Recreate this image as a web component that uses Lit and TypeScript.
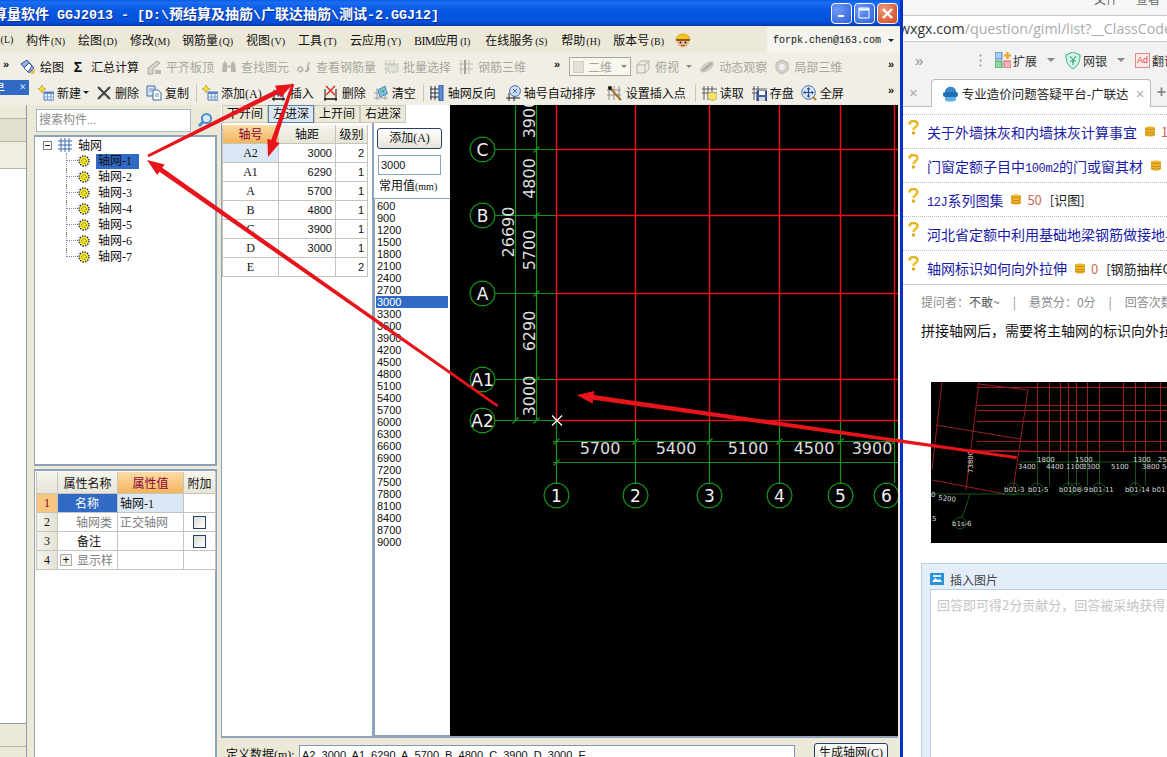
import { LitElement, html, svg, css, nothing } from 'lit';
import { customElement } from 'lit/decorators.js';

const UI_FONT = css`"Liberation Serif", "Noto Sans CJK SC", sans-serif`;

/* ---------- icones ---------- */
const ico = (body: unknown, w = 16, h = 16) =>
  html`<svg class="ico" width=${w} height=${h} viewBox="0 0 16 16">${body}</svg>`;

const gridLines = (stroke: string) => svg`<path d="M3 1v14M7 1v14M11 1v14M1 5h14M1 10h14" stroke=${stroke} fill="none"/>`;

const ICONS: Record<string, unknown> = {
  draw: ico(svg`<path d="M1 5l6-4 7 8-5 5z" fill="#8fb4e4" stroke="#33579c"/><path d="M4 9l5-5 3 3-4 6z" fill="#fff" stroke="#33579c"/><path d="M9 14l6-4-1 5z" fill="#e8b93c"/>`),
  align: ico(svg`<path d="M2 9l9-7 3 2-7 6v5H2z" fill="#d6d5cc" stroke="#a9a89f"/><path d="M9 11h6v4H9z" fill="#bdbcb2"/>`),
  find: ico(svg`<path d="M2 4h4v9H1zM10 4h4l1 9h-5z" fill="#b7b6ad"/><path d="M6 6h4v3H6z" fill="#cfcec5"/><path d="M3 2h2v2H3zM11 2h2v2h-2z" fill="#c9c8be"/>`),
  rebar: ico(svg`<path d="M2 12c-1-3 2-5 4-3s-1 5-3 3M9 12c2 1 5-1 3-4M13 3l-2 9" stroke="#b2b1a8" stroke-width="1.6" fill="none"/>`),
  batch: ico(svg`${gridLines('#c6c5bb')}<path d="M5 6h10v7H5z" fill="#e2e1d8" stroke="#bbb" stroke-dasharray="2 1"/>`),
  rebar3d: ico(svg`${gridLines('#bdbcb2')}<path d="M7 1v14" stroke="#a3a298" stroke-width="2"/>`),
  top: ico(svg`<path d="M2 6l4-4h8v8l-4 4H2z" fill="#eeede3" stroke="#b2b1a8"/><path d="M2 6h8v8M10 6l4-4" stroke="#b2b1a8" fill="none"/>`),
  orbit: ico(svg`<ellipse cx="8" cy="8" rx="8" ry="4" transform="rotate(-35 8 8)" fill="#cfcec5"/><path d="M3 12L13 4" stroke="#aaa99f" stroke-width="2"/>`),
  local: ico(svg`<path d="M8 1l6 3v7l-6 4-6-4V4z" fill="#d3d2c9" stroke="#b9b8ae"/><circle cx="8" cy="8" r="3" fill="#eee"/>`),
  newSheet: ico(svg`<path d="M4 0l1.4 2.6L8 4 5.4 5.4 4 8 2.6 5.4 0 4l2.6-1.4z" fill="#f4dc3a" stroke="#a88b16" stroke-width=".6"/><path d="M6 7h10v8H6z" fill="#eaf1fb" stroke="#4d74b4"/><path d="M6 7h10v2H6z" fill="#5a86c6"/><path d="M9.5 9v6M13 9v6M6 12h10" stroke="#7f9dc9"/>`),
  cross: ico(svg`<path d="M2 2l12 12M14 2L2 14" stroke="#444" stroke-width="2.2"/>`),
  copy: ico(svg`<path d="M1 1h8v10H1z" fill="#d9e6f7" stroke="#40699f"/><path d="M7 5h5l3 3v7H7z" fill="#fff" stroke="#40699f"/><path d="M9 9h4M9 11h4M3 4h4M3 6h3" stroke="#6c8fc0"/>`),
  insert: ico(svg`<path d="M2 14h13" stroke="#111" stroke-width="1.5"/><path d="M4 5v11M13 5v11" stroke="#111"/><path d="M7 2h3v6H7z" fill="#3566b8"/><path d="M5 8h7l-3.5 4z" fill="#3566b8"/>`, 18),
  del: ico(svg`<path d="M2 14h13" stroke="#111" stroke-width="1.5"/><path d="M3 4v12M14 4v12" stroke="#111"/><path d="M4 1l9 9M13 1l-9 9" stroke="#d22" stroke-width="1.4"/>`, 18),
  clear: ico(svg`<path d="M1 13h14M4 3v12M12 3v12M1 8h14" stroke="#9aa0aa"/><path d="M5 5l7-4 2 8-7 3z" fill="#7cc0e8" stroke="#4a8ab8"/><path d="M7 6l4-1v3z" fill="#52b056"/>`),
  reverse: ico(svg`<path d="M2 1v14M6 1v14M1 4h11M1 8h11M1 12h11" stroke="#26324a"/><path d="M10 0h4v16h-4z" fill="#5d8ed6" stroke="#2d5aa0"/>`),
  autosort: ico(svg`<path d="M1 13h14M4 8v8M9 8v8" stroke="#222"/><circle cx="10" cy="6" r="5.4" fill="#cfe0f6" stroke="#3f6cb0"/><path d="M8 4l4 4M12 4l-4 4" stroke="#3f6cb0"/>`),
  setpoint: ico(svg`<path d="M3 1v14M8 1v14M13 1v14M1 5h14M1 10h14" stroke="#8a8f98"/><path d="M4 3l11 12" stroke="#a8742a" stroke-width="2"/><circle cx="4" cy="3" r="2" fill="#111"/>`, 18),
  read: ico(svg`<path d="M3 1v14M7 1v14M11 1v14M1 4h15M1 8h15" stroke="#555c68"/><path d="M7 9c1-2 7-2 9 0v4c-1 3-7 3-9 0z" fill="#f4e36a" stroke="#c8b13a"/>`),
  save: ico(svg`<path d="M3 1v14M7 1v14M1 4h15M1 8h15" stroke="#555c68"/><path d="M6 6h10v10H6z" fill="#3f5fb0" stroke="#26397a"/><path d="M8 6h6v4H8z" fill="#fff"/><path d="M8 12h6v4H8z" fill="#d8d8d8"/>`),
  full: ico(svg`<circle cx="7.5" cy="7.5" r="6.8" fill="#dbe7f6" stroke="#4a70ac"/><path d="M7.5 3v9M3 7.5h9" stroke="#2c4f92" stroke-width="1.2"/><path d="M7.5 2l2 2.4h-4zM7.5 13l2-2.4h-4zM2 7.5l2.4-2v4zM13 7.5l-2.4-2v4z" fill="#2c4f92"/><path d="M12 12l3 3" stroke="#b8862a" stroke-width="2"/>`),
};

const GEAR = html`<svg width="12" height="12" viewBox="0 0 12 12"><circle cx="6" cy="6" r="4.6" fill="#f6ea2e"/><circle cx="6" cy="6" r="5" fill="none" stroke="#222" stroke-width="1.4" stroke-dasharray="1.4 1.2"/><circle cx="6" cy="6" r="2.2" fill="none" stroke="#444" stroke-dasharray="1 1"/></svg>`;

/* ---------- fenetre logiciel ---------- */
type Tool = { icon?: string; label: string; off?: boolean; caret?: boolean; sigma?: boolean; sep?: boolean; wide?: boolean };

const MENU: [string, string][] = [
  ['构件', 'N'], ['绘图', 'D'], ['修改', 'M'], ['钢筋量', 'Q'], ['视图', 'V'], ['工具', 'T'],
  ['云应用', 'Y'], ['BIM应用', 'I'], ['在线服务', 'S'], ['帮助', 'H'], ['版本号', 'B'],
];

const ROW1_A: Tool[] = [
  { icon: 'draw', label: '绘图' },
  { sigma: true, label: '汇总计算' },
  { icon: 'align', label: '平齐板顶', off: true },
  { icon: 'find', label: '查找图元', off: true },
  { icon: 'rebar', label: '查看钢筋量', off: true },
  { icon: 'batch', label: '批量选择', off: true },
  { icon: 'rebar3d', label: '钢筋三维', off: true },
];
const ROW1_B: Tool[] = [
  { icon: 'top', label: '俯视', off: true, caret: true },
  { icon: 'orbit', label: '动态观察', off: true },
  { icon: 'local', label: '局部三维', off: true },
];
const ROW2: Tool[] = [
  { icon: 'newSheet', label: '新建', caret: true },
  { icon: 'cross', label: '删除' },
  { icon: 'copy', label: '复制' },
  { sep: true, label: '' },
  { icon: 'newSheet', label: '添加(A)' },
  { icon: 'insert', label: '插入' },
  { icon: 'del', label: '删除' },
  { icon: 'clear', label: '清空' },
  { sep: true, label: '' },
  { icon: 'reverse', label: '轴网反向', wide: true },
  { icon: 'autosort', label: '轴号自动排序', wide: true },
  { icon: 'setpoint', label: '设置插入点', wide: true },
  { sep: true, label: '' },
  { icon: 'read', label: '读取' },
  { icon: 'save', label: '存盘' },
  { icon: 'full', label: '全屏' },
];

const AXIS_ROWS = [
  ['A2', '3000', '2'], ['A1', '6290', '1'], ['A', '5700', '1'], ['B', '4800', '1'],
  ['C', '3900', '1'], ['D', '3000', '1'], ['E', '', '2'],
];
const COMMON = [600, 900, 1200, 1500, 1800, 2100, 2400, 2700, 3000, 3300, 3600, 3900, 4200, 4500, 4800, 5100,
  5400, 5700, 6000, 6300, 6600, 6900, 7200, 7500, 7800, 8100, 8400, 8700, 9000];

@customElement('ggj-window')
export class GgjWindow extends LitElement {
  static styles = css`
    :host { display: block; width: 900px; height: 757px; overflow: hidden; background: #ece9d8; font: 12px ${UI_FONT}; color: #111; }
    .title { height: 26px; display: flex; align-items: center; padding-right: 2px; color: #fff; font-size: 14px; font-weight: 700; white-space: pre;
      background: linear-gradient(180deg, #0a5fe8, #1c6cf0 10%, #0658e4 40%, #0450da 85%, #0238b0); }
    .title .txt { margin-left: -7px; flex: 1; text-shadow: 1px 1px 0 #0a2f90; }
    .mono { font-family: "Liberation Mono", monospace; font-size: 13.33px; }
    .wbtn { width: 21px; height: 21px; margin-left: 2px; box-sizing: border-box; border: 1px solid #fff; border-radius: 4px; display: flex; align-items: center; justify-content: center;
      background: radial-gradient(circle at 30% 30%, #6f9af2, #2c5fdc); }
    .wbtn.close { background: radial-gradient(circle at 30% 30%, #ee9a7c, #d0431c); }
    .menu { height: 27px; display: flex; align-items: center; gap: 12px; background: #ece9d8; white-space: nowrap; }
    .menu .m { display: inline-block; width: 16px; font-size: 10px; text-align: center; }
    .menu .tight { letter-spacing: -0.7px; }
    .menu .tight .m { letter-spacing: 0; }
    .menu .hat { margin-left: -3px; }
    .account { margin-left: auto; width: 133px; align-self: stretch; margin-top: 1px; background: #f5f4ee; display: flex; align-items: center; box-sizing: border-box; padding: 0 6px; font: 10px "Liberation Mono", monospace; justify-content: space-between; }
    .bar { display: flex; align-items: center; white-space: nowrap; background: #f1efe5; overflow: hidden; }
    .bar.r1 { height: 27px; }
    .bar.r2 { height: 25px; }
    .chev { font: 700 11px "Liberation Sans", sans-serif; width: 8px; margin-top: -5px; color: #111; }
    .tool { display: flex; align-items: center; gap: 4px; margin-right: 7px; }
    .r2 .tool { gap: 3px; }
    .tool.wide { margin-right: 9px; }
    .tool.off { color: #a8a79e; }
    .caret { width: 0; height: 0; border: 3px solid transparent; border-top: 3px solid #222; border-bottom: 0; margin-left: -1px; }
    .tool.off .caret { border-top-color: #888; margin-left: 3px; }
    .sigma { font: 700 14px "Liberation Sans", sans-serif; width: 14px; text-align: center; margin-right: 2px; }
    .sep { width: 1px; height: 18px; background: #c9c7b8; margin-right: 5px; }
    .combo { width: 62px; height: 19px; box-sizing: border-box; border: 1px solid #a8a79e; background: #f7f6ef; color: #a8a79e; display: flex; align-items: center; gap: 4px; padding: 0 3px; margin: 0 4px 0 7px; }
    .combo i { width: 13px; height: 10px; background: #e3e2d8; border: 1px solid #d0cfc5; }
    .combo .caret { border-top-color: #888; margin-left: 5px; }
    .panel-tab { width: 29px; height: 15px; margin-bottom: 10px; background: #316ac5; color: #fff; overflow: hidden; display: flex; align-items: center; justify-content: space-between; flex: none; box-sizing: border-box; padding-right: 3px; margin-right: 9px; }
    .panel-tab b { font-weight: 400; margin-left: -7px; }
    .body { display: flex; height: 652px; }
    .stub { width: 27px; margin-right: 7px; display: flex; flex-direction: column; border-right: 1px solid #8c9aaa; box-sizing: border-box; flex: none; }
    .stub div { border-bottom: 1px solid #b8b6a6; box-sizing: border-box; }
    .stub .a { height: 14px; } .stub .b { height: 23px; background: #e2dfcd; } .stub .c { height: 27px; background: #f0eee0; }
    .stub .w { height: 555px; background: #fff; border-bottom: 1px solid #8c9aaa; } .stub .d { height: 23px; } .stub .e { flex: 1; border: 0; }
    .side { width: 183px; flex: none; display: flex; flex-direction: column; }
    .search { height: 30px; display: flex; align-items: center; gap: 6px; padding-left: 2px; box-sizing: border-box; }
    .search .inp { width: 155px; height: 23px; box-sizing: border-box; border: 1px solid #a9b8c8; background: #fff; color: #8b8b8b; padding-left: 2px; line-height: 21px; font-size: 12px; }
    .tree { height: 331px; box-sizing: border-box; border: 2px solid #8ea2b8; border-width: 2px 2px 2px 1px; background: #fff; }
    .node { height: 16px; display: flex; align-items: center; }
    .root { padding-left: 8px; gap: 6px; }
    .exp { width: 9px; height: 9px; box-sizing: border-box; border: 1px solid #808080; display: flex; align-items: center; justify-content: center; }
    .exp::after { content: ""; width: 5px; height: 1px; background: #222; }
    .leaf { padding-left: 31px; }
    .conn { width: 12px; height: 16px; border-left: 1px dotted #888; box-sizing: border-box; flex: none; }
    .conn i { display: block; height: 8px; border-bottom: 1px dotted #888; box-sizing: border-box; }
    .leaf.last .conn { height: 8px; align-self: flex-start; }
    .lb { margin-left: 6px; padding: 0 2px; height: 15px; line-height: 15px; }
    .lb.sel { background: #316ac5; color: #111; width: 39px; }
    .props { flex: 1; margin-top: 3px; border: 2px solid #8ea2b8; border-width: 2px 2px 0 1px; background: #fff; padding: 1px 0 0 1px; }
    table { border-collapse: collapse; table-layout: fixed; background: #fff; }
    td, th { border: 1px solid #c5c5bb; font-weight: 400; padding: 0; overflow: hidden; white-space: nowrap; font-size: 12px; }
    th { background: linear-gradient(#f5f4ec, #e7e5d8); border-top: 0; }
    th.on { background: linear-gradient(#fbdca6, #f2b45c); color: #8a0038; }
    .props table td, .props table th { height: 18px; }
    .props th { height: 21px !important; }
    .rowno { background: linear-gradient(90deg, #f4f3ea, #e4e2d4); text-align: center; }
    .rowno.on { background: #f8c67e; color: #8a0038; }
    .pn { text-align: right; padding-right: 16px; }
    .pn.on { background: #316ac5; color: #fff; padding-right: 18px; }
    .gray { color: #808080; }
    .pv { padding-left: 2px; }
    .pv.on { background: #dce7f5; }
    .check { display: block; width: 13px; height: 13px; margin: 0 auto; box-sizing: border-box; border: 1px solid #24406c; background: linear-gradient(135deg, #dcdcd2, #fff); }
    .plus { display: inline-flex; width: 12px; height: 12px; box-sizing: border-box; border: 1px solid #aaa; align-items: center; justify-content: center; font: 12px "Liberation Sans", sans-serif; color: #111; background: #f4f3ec; margin-right: 5px; vertical-align: middle; }
    .prop-sub { display: flex; align-items: center; padding-left: 2px; }
    .center { margin-left: 4px; width: 677px; flex: none; display: flex; flex-direction: column; }
    .work { height: 631px; display: flex; border-bottom: 2px solid #8ea2b8; box-sizing: content-box; }
    .form { width: 229px; flex: none; display: flex; flex-direction: column; background: #fff; }
    .tabs { height: 18px; display: flex; padding-left: 1px; box-sizing: border-box; flex: none; }
    .tab { width: 46px; height: 18px; box-sizing: border-box; background: #ece9d8; border: 1px solid #c9c7b6; text-align: center; line-height: 16px; font-size: 12px; flex: none; }
    .tab.on { background: #dce7f5; border-color: #5a7ea8; }
    .form-row { flex: 1; display: flex; min-height: 0; }
    .axes-body { width: 153px; flex: none; border-left: 1px solid #8ea2b8; border-right: 2px solid #8ea2b8; background: #fff; padding: 2px 0 0 0; box-sizing: border-box; }
    .axes-body table { width: 145px; }
    .axes-body th { height: 18px; }
    .axes-body td { height: 18px; }
    .c { text-align: center; font-family: "Liberation Serif", serif; }
    .n { text-align: right; padding-right: 3px; font: 11px "Liberation Sans", sans-serif; }
    .a2 { background: #dce7f5; }
    .values { width: 76px; flex: none; display: flex; flex-direction: column; }
    .values .top { height: 75px; box-sizing: border-box; padding: 5px 0 0 3px; flex: none; }
    .add { width: 65px; height: 21px; box-sizing: border-box; border: 1px solid #24406c; border-radius: 3px; background: linear-gradient(#fff, #e6e4d8); text-align: center; line-height: 19px; }
    .val { width: 63px; height: 20px; margin: 6px 0 0 1px; box-sizing: border-box; border: 1px solid #8ea2b8; background: #fff; font: 11px/18px "Liberation Sans", sans-serif; padding-left: 2px; }
    .lbl { margin: 4px 0 0 2px; line-height: 14px; white-space: nowrap; }
    .lbl .s { font-size: 10px; }
    .list { flex: 1; border: 1px solid #8ea2b8; border-right: 0; background: #fff; padding: 1px 0 0 1px; font: 11px/12px "Liberation Sans", sans-serif; }
    .list div { height: 12px; padding-left: 1px; width: 72px; box-sizing: border-box; }
    .list .sel { background: #316ac5; color: #fff; }
    cad-view { flex: none; }
    .def { flex: 1; display: flex; padding: 7px 0 0 5px; align-items: flex-start; overflow: hidden; white-space: nowrap; }
    .def .k { width: 73px; line-height: 18px; padding-top: 1px; }
    .def .inp { width: 496px; height: 20px; box-sizing: border-box; border: 1px solid #7f97b2; background: #fff; font: 11px/18px "Liberation Sans", sans-serif; padding-left: 2px; }
    .gen { margin-left: 19px; width: 74px; height: 20px; box-sizing: border-box; border: 1px solid #24406c; border-radius: 3px; background: linear-gradient(#fff, #e6e4d8); text-align: center; line-height: 18px; margin-top: -2px; }
  `;

  private tools(list: Tool[]) {
    return list.map((t) => t.sep
      ? html`<span class="sep"></span>`
      : html`<span class="tool ${t.off ? 'off' : ''} ${t.wide ? 'wide' : ''}">
          ${t.sigma ? html`<span class="sigma">Σ</span>` : ICONS[t.icon!]}
          <span>${t.label}</span>${t.caret ? html`<span class="caret"></span>` : nothing}
        </span>`);
  }

  render() {
    return html`
      <div class="title">
        <span class="txt">算量软件<span class="mono"> GGJ2013 - [D:\\</span>预结算及抽筋<span class="mono">\\</span>广联达抽筋<span class="mono">\\</span>测试<span class="mono">-2.GGJ12]</span></span>
        <span class="wbtn"><svg width="9" height="9"><path d="M1 6h6v2H1z" fill="#fff"/></svg></span>
        <span class="wbtn"><svg width="13" height="13"><path d="M1 1h10v10H1z" fill="none" stroke="#fff"/><path d="M1 2.5h10" stroke="#fff" stroke-width="2"/></svg></span>
        <span class="wbtn close"><svg width="13" height="13"><path d="M2 2l9 9M11 2l-9 9" stroke="#fff" stroke-width="2.4"/></svg></span>
      </div>
      <div class="menu">
        <span class="m" style="width:14px">(L)</span>
        ${MENU.map(([t, k]) => html`<span class=${t.startsWith('BIM') ? 'tight' : ''}>${t}<span class="m">(${k})</span></span>`)}
        <svg class="hat" width="18" height="18" viewBox="0 0 18 18"><circle cx="9" cy="10" r="6.5" fill="#e8b98e"/><path d="M2 9C2 1 16 1 16 9z" fill="#f5c518" stroke="#b58a10" stroke-width=".6"/><path d="M2 9h14" stroke="#7a4a1a" stroke-width="1.6"/><circle cx="6.5" cy="11.5" r="1" fill="#222"/><circle cx="11.5" cy="11.5" r="1" fill="#222"/><path d="M7 14.5h4" stroke="#a33"/></svg>
        <span class="account"><span>forpk.chen@163.com</span><span class="caret"></span></span>
      </div>
      <div class="bar r1">
        <span class="chev" style="margin-left:3px;margin-right:9px">»</span>
        ${this.tools(ROW1_A)}
        <span class="chev" style="margin-left:21px">»</span>
        <span class="combo"><i></i>二维<span class="caret"></span></span>
        ${this.tools(ROW1_B)}
        <span class="chev" style="margin-left:auto;margin-right:4px">»</span>
      </div>
      <div class="bar r2">
        <span class="panel-tab"><b>早</b><span>×</span></span>
        ${this.tools(ROW2)}
        <span class="chev" style="margin-left:auto;margin-right:4px">»</span>
      </div>
      <div class="body">
        <div class="stub"><div class="a"></div><div class="b"></div><div class="c"></div><div class="w"></div><div class="d"></div><div class="e"></div></div>
        <div class="side">
          <div class="search">
            <div class="inp">搜索构件...</div>
            <svg width="16" height="16" viewBox="0 0 16 16"><circle cx="9.5" cy="6.5" r="4.6" fill="#dcebfa" stroke="#4a8fd0" stroke-width="2"/><path d="M6 10l-4 4" stroke="#4a8fd0" stroke-width="3"/></svg>
          </div>
          <div class="tree">
            <div class="node root"><span class="exp"></span><svg width="14" height="14" viewBox="0 0 14 14"><path d="M3 0v14M7 0v14M11 0v14M0 3h14M0 7h14M0 11h14" stroke="#3f66ac" fill="none"/></svg><span>轴网</span></div>
            ${[1, 2, 3, 4, 5, 6, 7].map((n) => html`<div class="node leaf ${n === 7 ? 'last' : ''}">
              <span class="conn"><i></i></span>${GEAR}<span class="lb ${n === 1 ? 'sel' : ''}">轴网-${n}</span></div>`)}
          </div>
          <div class="props">
            <table style="width:179px">
              <colgroup><col style="width:21px"><col style="width:60px"><col style="width:66px"><col style="width:32px"></colgroup>
              <tr><th></th><th>属性名称</th><th class="on">属性值</th><th>附加</th></tr>
              <tr><td class="rowno on">1</td><td class="pn on">名称</td><td class="pv on">轴网-1</td><td></td></tr>
              <tr><td class="rowno">2</td><td class="pn gray" style="padding-right:5px">轴网类</td><td class="pv gray">正交轴网</td><td><i class="check"></i></td></tr>
              <tr><td class="rowno">3</td><td class="pn">备注</td><td></td><td><i class="check"></i></td></tr>
              <tr><td class="rowno">4</td><td class="gray"><span class="prop-sub"><span class="plus">+</span>显示样</span></td><td></td><td></td></tr>
            </table>
          </div>
        </div>
        <div class="center">
          <div class="work">
            <div class="form">
              <div class="tabs">${['下开间', '左进深', '上开间', '右进深'].map((t, i) => html`<span class="tab ${i === 1 ? 'on' : ''}">${t}</span>`)}</div>
              <div class="form-row">
                <div class="axes-body">
                  <table>
                    <colgroup><col style="width:56px"><col style="width:57px"><col style="width:32px"></colgroup>
                    <tr><th class="on">轴号</th><th>轴距</th><th>级别</th></tr>
                    ${AXIS_ROWS.map((r, i) => html`<tr><td class="c ${i === 0 ? 'a2' : ''}">${r[0]}</td><td class="n">${r[1]}</td><td class="n">${r[2]}</td></tr>`)}
                  </table>
                </div>
                <div class="values">
                  <div class="top">
                    <div class="add">添加(A)</div>
                    <div class="val">3000</div>
                    <div class="lbl">常用值<span class="s">(mm)</span></div>
                  </div>
                  <div class="list">${COMMON.map((v) => html`<div class=${v === 3000 ? 'sel' : ''}>${v}</div>`)}</div>
                </div>
              </div>
            </div>
            <cad-view></cad-view>
          </div>
          <div class="def">
            <span class="k">定义数据(m):</span>
            <div class="inp">A2, 3000, A1, 6290, A, 5700, B, 4800, C, 3900, D, 3000, E</div>
            <div class="gen">生成轴网(C)</div>
          </div>
        </div>
      </div>
    `;
  }
}

/* ---------- vue CAO ---------- */
const RX = [556.5, 635.5, 709.5, 779.5, 840.5, 894.5];
const RY = [149.5, 215.5, 293.5, 379.5, 420.5];

const octagon = (cx: number, cy: number, r: number) => {
  const pts: string[] = [];
  for (let i = 0; i < 14; i++) {
    const a = (i / 14) * Math.PI * 2;
    pts.push(`${(cx + r * Math.cos(a)).toFixed(1)},${(cy + r * Math.sin(a)).toFixed(1)}`);
  }
  return pts.join(' ');
};

@customElement('cad-view')
export class CadView extends LitElement {
  static styles = css`
    :host { display: block; width: 448px; height: 631px; background: #000; }
    svg { display: block; }
    .grn { stroke: #14961c; fill: none; stroke-width: 1.2; }
    .red { stroke: #e8101a; fill: none; stroke-width: 1.5; }
    text { font-family: "DejaVu Sans", sans-serif; fill: #dedede; font-size: 16px; text-anchor: middle; }
    .big { font-size: 17px; fill: #f2f2f2; }
  `;

  render() {
    const tick = (x: number, y: number) => svg`<path class="grn" d="M${x - 3} ${y + 3}L${x + 3} ${y - 3}"/>`;
    const vText = (t: string, x: number, y: number) => svg`<text transform="translate(${x} ${y}) rotate(-90)">${t}</text>`;
    const left: [string, number][] = [['C', 149.5], ['B', 215.5], ['A', 293.5], ['A1', 379.5], ['A2', 420.5]];
    const bottom = [556.5, 635.5, 709.5, 779.5, 840.5, 886.5];
    return html`<svg width="448" height="631" viewBox="450 105 448 631">
      ${RY.map((y) => svg`<path class="grn" d="M495 ${y}H556.5"/>`)}
      ${RX.map((x) => svg`<path class="grn" d="M${x} 420.5V483"/>`)}
      <path class="grn" d="M515.5 105V420.5M536.5 105V420.5M553 441.5H898M553 462.5H898"/>
      ${RX.map((x) => svg`<path class="red" d="M${x} 105V420.5"/>`)}
      ${RY.map((y) => svg`<path class="red" d="M556.5 ${y}H898"/>`)}
      ${RY.map((y) => tick(536.5, y))}
      ${tick(515.5, 420.5)}
      ${RX.map((x) => tick(x, 441.5))}
      ${tick(556.5, 462.5)}
      ${left.map(([t, y]) => svg`<polygon class="grn" points=${octagon(482.5, y, 12.5)}/><text class="big" x="482.5" y=${y + 6.5}>${t}</text>`)}
      ${bottom.map((x, i) => svg`<polygon class="grn" points=${octagon(x, 495.5, 12.5)}/><text class="big" x=${x} y="502">${i + 1}</text>`)}
      ${vText('3900', 535, 118)}${vText('4800', 535, 178.5)}${vText('5700', 535, 250)}${vText('6290', 535, 331)}${vText('3000', 535, 396)}
      ${vText('26690', 514, 232)}
      <text x="600" y="454">5700</text><text x="676" y="454">5400</text><text x="748" y="454">5100</text>
      <text x="814" y="454">4500</text><text x="872" y="454">3900</text>
      <path d="M552 415.5l10 10M562 415.5l-10 10" stroke="#fff" stroke-width="1.2"/>
    </svg>`;
  }
}

/* ---------- navigateur ---------- */
type Question = { title: string; coin?: string; tag?: string };
const QUESTIONS: Question[] = [
  { title: '关于外墙抹灰和内墙抹灰计算事宜', coin: '10' },
  { title: '门窗定额子目中100m2的门或窗其材', coin: '5' },
  { title: '12J系列图集', coin: '50', tag: '[识图]' },
  { title: '河北省定额中利用基础地梁钢筋做接地与否' },
  { title: '轴网标识如何向外拉伸', coin: '0', tag: '[钢筋抽样GGJ2013]' },
];

// les suites latines sont plus etroites que le chinois dans la reference
const latinRuns = (s: string) =>
  s.split(/([A-Za-z0-9]+)/).map((p, i) => (i % 2 ? html`<span class="lat">${p}</span>` : p));

const COIN = html`<svg class="coin" width="10" height="11" viewBox="0 0 10 11"><path d="M0 2c0-2 10-2 10 0v7c0 2-10 2-10 0z" fill="#f0b52a"/><path d="M0 2.5c2 1.4 8 1.4 10 0M0 5.5c2 1.4 8 1.4 10 0M0 8c2 1.4 8 1.4 10 0" stroke="#b57f12" fill="none" stroke-width=".8"/></svg>`;
const ASK = html`<svg class="ask" width="11" height="15" viewBox="0 0 11 15"><path d="M1.5 4.5C1.5 0 9.5 0 9.5 4c0 3-4 3-4 6" fill="none" stroke="#f0bf28" stroke-width="2.6"/><path d="M1.5 4.5C1.5 0 9.5 0 9.5 4" fill="none" stroke="#c99a16" stroke-width=".6"/><rect x="4" y="11.5" width="3" height="3" fill="#e0ad1c"/></svg>`;

@customElement('browser-pane')
export class BrowserPane extends LitElement {
  static styles = css`
    :host { display: block; width: 264px; height: 757px; overflow: hidden; background: #fff; font: 14px "Noto Sans CJK SC", sans-serif; white-space: nowrap; }
    .top { height: 15px; background: #f6f6f6; color: #666; font-size: 12px; line-height: 12px; display: flex; padding-left: 191px; gap: 18px; overflow: hidden; }
    .top span { margin-top: -7px; }
    .addr { height: 27px; box-sizing: border-box; border: 1px solid #c8c8c8; border-width: 1px 0; background: #fff; font: 14.2px/25px "Open Sans", sans-serif; color: #aaa; overflow: hidden; }
    .addr b { font-weight: 400; color: #333; margin-left: -4px; }
    .tools { height: 36px; background: #f2f2f2; display: flex; align-items: center; font-size: 12px; color: #333; }
    .tools > * { flex: none; }
    .tools .ch { color: #888; margin-left: 12px; width: 64px; font: 15px "Liberation Sans", sans-serif; }
    .grip { width: 3px; height: 14px; background-image: radial-gradient(#bbb 1px, transparent 1.2px); background-size: 3px 5px; margin-right: 13px; }
    .tk { display: flex; align-items: center; gap: 2px; margin-right: 8px; }
    .tri { width: 0; height: 0; border: 4px solid transparent; border-top: 4px solid #888; border-bottom: 0; margin: 0 13px 0 2px; }
    .ad { width: 15px; height: 15px; box-sizing: border-box; border: 1px solid #e08a8a; background: #fbe8e8; color: #d44; font: 9px/13px "Liberation Sans", sans-serif; text-align: center; }
    .tabs { height: 29px; background: #f2f2f2; display: flex; align-items: flex-end; border-bottom: 1px solid #bbb; box-sizing: border-box; color: #999; }
    .tabs .x { font: 15px "Liberation Sans", sans-serif; color: #aaa; }
    .tab { width: 220px; height: 28px; box-sizing: border-box; margin: 0 0 -1px 13px; background: #fff; border: 1px solid #bbb; border-bottom: 0; border-radius: 4px 4px 0 0; display: flex; align-items: center; padding: 0 8px 0 11px; gap: 4px; color: #222; font-size: 12.5px; overflow: hidden; flex: none; }
    .tab span.t { width: 166px; overflow: hidden; flex: none; }
    .qlist { margin-top: 7px; border-top: 1px dotted #bbb; border-bottom: 1px solid #ccc; height: 169px; box-sizing: content-box; overflow: hidden; }
    .q { height: 34px; display: flex; align-items: center; gap: 8px; padding-left: 5px; border-bottom: 1px dotted #bbb; box-sizing: border-box; }
    .q:last-child { border-bottom: 0; }
    .q .ask { align-self: flex-start; margin-top: 5px; flex: none; }
    .q a { color: #1a1aa8; flex: none; }
    .lat { font: 12px "Liberation Mono", monospace; letter-spacing: -0.4px; }
    .meta { display: flex; align-items: center; gap: 6px; font-size: 13px; flex: none; }
    .meta .pts { color: #c86a5a; font-size: 13px; }
    .meta .tg { color: #222; margin-left: 2px; }
    .info { height: 32px; display: flex; align-items: center; padding-left: 18px; color: #8c8c8c; font-size: 12px; gap: 13px; }
    .info em { font-style: normal; color: #555; }
    .body { padding-left: 18px; color: #111; height: 28px; line-height: 26px; }
    .shot { display: block; margin: 37px 0 0 28px; background: #000; }
    .shot text { font: 7px "DejaVu Sans", sans-serif; fill: #d8d8d8; }
    .insert { margin: 20px 0 0 18px; height: 220px; background: #e4eefb; border: 1px solid #bcd0e6; border-right: 0; box-sizing: border-box; padding: 6px 0 0 8px; color: #444; font-size: 12px; }
    .insert .h { display: flex; align-items: center; gap: 6px; height: 18px; }
    .area { height: 200px; margin-top: 1px; background: #fff; border: 1px solid #bcd0e6; border-right: 0; color: #c4c4c4; padding: 5px 0 0 6px; overflow: hidden; font-size: 13px; }
  `;

  render() {
    const gridY = [387.5, 405.5, 410.5, 421.5, 441.5, 451.5];
    const gridX = [1037.5, 1049.5, 1060.5, 1068.5, 1076.5, 1087.5, 1099.5, 1123.5, 1135.5, 1145.5, 1160.5];
    const greenX = [1037.5, 1049.5, 1068.5, 1076.5, 1087.5, 1099.5, 1135.5, 1145.5];
    const t = (x: number, y: number, s: string, extra = '') => svg`<text x=${x} y=${y} transform=${extra}>${s}</text>`;
    return html`
      <div class="top"><span>文件</span><span>查看</span></div>
      <div class="addr"><b>wxgx.com</b>/question/giml/list?__ClassCode=Answer</div>
      <div class="tools">
        <span class="ch">»</span><span class="grip"></span>
        <span class="tk"><svg width="16" height="16" viewBox="0 0 16 16"><rect x="0" y="0" width="7" height="7" fill="#a9cdf4" stroke="#4a84c4"/><rect x="0" y="9" width="7" height="7" fill="#8fd6a4" stroke="#3fa25f"/><rect x="9" y="9" width="7" height="7" fill="#f7b3b8" stroke="#d8646c"/><path d="M12.5 0v7M9 3.5h7" stroke="#eeaa30" stroke-width="2.4"/></svg>扩展</span><span class="tri"></span>
        <span class="tk" style="margin-left:-3px"><svg width="16" height="17" viewBox="0 0 16 17"><path d="M8 0l7 3c0 7-2 11-7 14C3 14 1 10 1 3z" fill="#d6f4e6" stroke="#35ad7c"/><path d="M5 4l3 4 3-4M8 8v5M5 9h6" stroke="#1e9a66" fill="none"/></svg>网银</span><span class="tri"></span>
        <span class="tk" style="margin-left:-3px"><span class="ad">Ad</span>翻译</span>
      </div>
      <div class="tabs">
        <span class="x" style="margin:0 0 5px 6px">×</span>
        <div class="tab">
          <svg width="15" height="16" viewBox="0 0 15 16" style="flex:none"><path d="M2 6C2-1 13-1 13 6z" fill="#3a88c8"/><rect x="0" y="6" width="15" height="5" rx="2" fill="#1f6fb4"/><path d="M2 11h11v3c0 2-11 2-11 0z" fill="#5fb0e6"/></svg>
          <span class="t">专业造价问题答疑平台-广联达服务</span>
          <span class="x" style="margin-left:4px">×</span>
        </div>
        <span style="margin:0 0 5px 6px;font:700 16px 'Liberation Sans',sans-serif;color:#888">+</span>
      </div>
      <div class="qlist">
        ${QUESTIONS.map((q) => html`<div class="q">${ASK}<a>${latinRuns(q.title)}</a>
          ${q.coin ? html`<span class="meta">${COIN}<span class="pts">${q.coin}</span>${q.tag ? html`<span class="tg">${q.tag}</span>` : nothing}</span>` : nothing}</div>`)}
      </div>
      <div class="info"><span>提问者：<em>不敢~</em></span><span>|</span><span>悬赏分：0分</span><span>|</span><span>回答次数：</span></div>
      <div class="body">拼接轴网后，需要将主轴网的标识向外拉伸</div>
      <svg class="shot" width="236" height="161" viewBox="931 382 236 161">
        <g stroke="#9a1c26" fill="none">
          ${gridY.map((y) => svg`<path d="M977 ${y}H1167"/>`)}
          ${gridX.map((x) => svg`<path d="M${x} 382V451"/>`)}
          <path d="M942 382L932 470M979 382L966 490M1028 390L1013 490M979 384L1028 390M936 425L1020 439M932 480L1005 494M966 450L1030 451"/>
        </g>
        <g stroke="#1c6a24" fill="none" stroke-width=".8">
          ${greenX.map((x) => svg`<path d="M${x} 452V486"/>`)}
          <path d="M1020 462H1167M931 494H1030M970 494L962 518"/>
          ${[1013, 1037, 1068, 1076, 1099, 1135].map((x) => svg`<circle cx=${x} cy="489" r="6"/>`)}
          <circle cx="960" cy="523" r="6"/>
        </g>
        ${t(1037, 461.5, '1800')}${t(1075, 461.5, '1500')}${t(1133, 461.5, '1300')}${t(1158, 461.5, '25')}
        ${t(1018, 469, '3400')}${t(1046, 469, '4400')}${t(1066, 469, '1100')}${t(1082, 469, '3300')}
        ${t(1111, 469, '5100')}${t(1142, 469, '3800')}${t(1162, 469, '50')}
        ${t(1004, 491.5, 'b01-3')}${t(1028, 491.5, 'b01-5')}${t(1059, 491.5, 'b0108-9')}${t(1089, 491.5, 'b01-11')}${t(1125, 491.5, 'b01-14')}${t(1152, 491.5, 'b01')}
        ${t(938, 500, '5200', 'rotate(6 938 500)')}${t(952, 526, 'b1s-6')}${t(932, 521, '5')}${t(931, 497, '0')}
        ${t(973, 473, '73800', 'rotate(-90 973 473)')}
      </svg>
      <div class="insert">
        <div class="h"><svg width="14" height="12" viewBox="0 0 14 12"><rect width="14" height="12" fill="#2a93d8"/><path d="M2 9l3-4 3 2 2-1 2 3z" fill="#fff"/><rect x="3" y="2" width="8" height="2" fill="#d7f0ff"/></svg>插入图片</div>
        <div class="area">回答即可得2分贡献分，回答被采纳获得系统奖励</div>
      </div>
    `;
  }
}

/* ---------- page ---------- */
type Arrow = [number, number, number, number];
const ARROWS: Arrow[] = [
  [148, 156, 293, 84],
  [293, 84, 268, 157],
  [497.7, 406, 147, 160],
  [1016.7, 457.7, 576.7, 395],
];

const arrowShape = ([x1, y1, x2, y2]: Arrow) => {
  const len = Math.hypot(x2 - x1, y2 - y1);
  const ux = (x2 - x1) / len, uy = (y2 - y1) / len;
  const nx = -uy, ny = ux;
  const bx = x2 - ux * 17, by = y2 - uy * 17;
  const p = (x: number, y: number) => `${x.toFixed(1)},${y.toFixed(1)}`;
  return svg`<polygon fill="#e8141c" points=${[
    p(x1 + nx * 1.4, y1 + ny * 1.4), p(bx + nx * 2.4, by + ny * 2.4), p(bx + nx * 6.5, by + ny * 6.5), p(x2, y2),
    p(bx - nx * 6.5, by - ny * 6.5), p(bx - nx * 2.4, by - ny * 2.4), p(x1 - nx * 1.4, y1 - ny * 1.4),
  ].join(' ')}/>`;
};

@customElement('app-root')
export class AppRoot extends LitElement {
  static styles = css`
    :host { display: block; width: 1167px; height: 757px; overflow: hidden; position: relative; }
    .desk { display: flex; }
    .edge { width: 3px; height: 757px; background: #0831c8; flex: none; }
    .arrows { position: absolute; left: 0; top: 0; pointer-events: none; }
  `;

  render() {
    return html`
      <div class="desk">
        <ggj-window></ggj-window>
        <div class="edge"></div>
        <browser-pane></browser-pane>
      </div>
      <svg class="arrows" width="1167" height="757">${ARROWS.map(arrowShape)}</svg>
    `;
  }
}
